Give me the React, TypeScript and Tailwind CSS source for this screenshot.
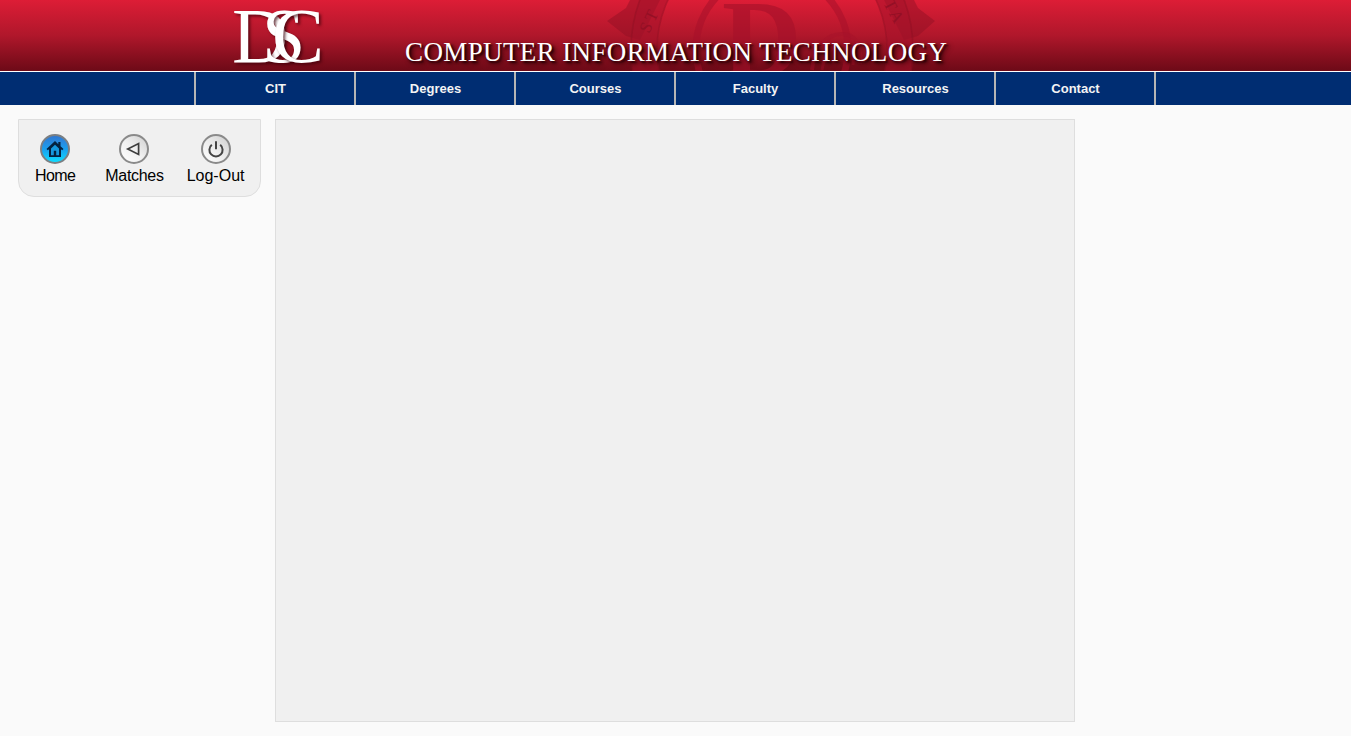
import React from 'react';

const navItems = ['CIT', 'Degrees', 'Courses', 'Faculty', 'Resources', 'Contact'];

// faint college seal behind the title
const Seal = () => (
  <svg className="absolute left-[600px] top-0" width="350" height="71" viewBox="0 0 350 71" fill="none">
    {/* star points either side */}
    <polygon points="7,21 26,8 30,0 60,0 40,40 26,36" fill="#8f0f24" opacity="0.45" />
    <polygon points="335,21 318,8 314,0 284,0 304,40 318,36" fill="#8f0f24" opacity="0.45" />
    <circle cx="172" cy="49" r="128" stroke="#a5112a" strokeWidth="25" opacity="0.5" />
    <circle cx="172" cy="49" r="141" stroke="#8f0f24" strokeWidth="1.5" opacity="0.5" />
    <circle cx="172" cy="49" r="115" stroke="#8f0f24" strokeWidth="1.5" opacity="0.5" />
    <circle cx="172" cy="49" r="76" stroke="#a5112a" strokeWidth="7" opacity="0.55" />
    <path d="M212 70c2-22 14-36 30-36 14 0 20 12 18 30" stroke="#a5112a" strokeWidth="4" opacity="0.5" />
    <path d="M222 70c2-14 10-25 20-25 9 0 12 8 11 20" stroke="#a5112a" strokeWidth="3" opacity="0.4" />
    <text x="49" y="34" fontFamily="'Liberation Serif', serif" fontSize="17" fill="#8f0f24" opacity="0.8" transform="rotate(-65 49 34)" letterSpacing="3">ST</text>
    <text x="283" y="3" fontFamily="'Liberation Serif', serif" fontSize="17" fill="#8f0f24" opacity="0.8" transform="rotate(62 283 3)" letterSpacing="3">TA</text>
    <text x="122" y="76" fontFamily="'Liberation Serif', serif" fontSize="110" fontWeight="700" fill="#a5112a" opacity="0.6">D</text>
  </svg>
);

const HomeIcon = () => (
  <span className="flex h-[30px] w-[30px] items-center justify-center rounded-full border-2 border-[#7b7f83] bg-gradient-to-b from-[#2f78d2] via-[#1a9fee] to-[#10dcff]">
    <svg width="20" height="20" viewBox="0 0 20 20">
      <path d="M10 2 1.5 10l1.3 1.3L4 10.2V18h12v-7.8l1.2 1.1 1.3-1.3-3-2.8V3h-2.2v2.2Z" fill="#04213f" />
      <path d="M10 5.8 6 9.4v6.9h2.8v-4.6h2.4v4.6H14V9.4Z" fill="#1597dd" />
      <rect x="9" y="12" width="2" height="5" fill="#04213f" />
    </svg>
  </span>
);

const BackIcon = () => (
  <span className="flex h-[30px] w-[30px] items-center justify-center rounded-full border-2 border-[#8a8a8a] bg-gradient-to-bl from-[#cfcfcf] via-[#f0f0f0] to-[#ffffff]">
    <svg width="18" height="18" viewBox="0 0 18 18" fill="none">
      <path d="M2.8 9 13.6 3.6v10.8Z" stroke="#3d3d3d" strokeWidth="1.7" />
    </svg>
  </span>
);

const PowerIcon = () => (
  <span className="flex h-[30px] w-[30px] items-center justify-center rounded-full border-2 border-[#8a8a8a] bg-gradient-to-bl from-[#cfcfcf] via-[#ececec] to-[#ffffff]">
    <svg width="20" height="20" viewBox="0 0 20 20" fill="none">
      <path d="M5.8 5.8a6.6 6.6 0 1 0 8.4 0" stroke="#444" strokeWidth="2" />
      <path d="M10 2.2v8" stroke="#444" strokeWidth="2" />
    </svg>
  </span>
);

const App: React.FC = () => {
  return (
    <div className="flex min-h-[736px] flex-col overflow-hidden bg-[#fafafa] font-['Liberation_Sans',Arial,sans-serif]">
      {/* Banner */}
      <header className="relative h-[71px] overflow-hidden bg-gradient-to-b from-[#dd1d36] via-[#b0172b] to-[#6d0a17]">
        <Seal />
        <div className="relative ml-[232px] flex h-full items-start">
          <div className="relative h-[64px] w-[92px] font-['Liberation_Serif',serif] text-[78px] leading-[78px] text-white [text-shadow:2px_2px_3px_rgba(60,0,10,0.7)]">
            <span className="absolute left-0 top-[-3px]">D</span>
            <span className="absolute left-[30px] top-[-3px]">S</span>
            <span className="absolute left-[40px] top-[-3px]">C</span>
          </div>
          <h1 className="ml-[81px] mt-[36px] whitespace-nowrap font-['Liberation_Serif',serif] text-[27px] leading-[32px] tracking-[0.38px] text-white [text-shadow:2px_2px_2px_#2a0005,3px_3px_5px_#2a0005]">
            COMPUTER INFORMATION TECHNOLOGY
          </h1>
        </div>
      </header>

      {/* Nav */}
      <nav className="flex h-[34px] border-t border-white bg-[#002d72] pl-[194px]">
        {navItems.map(item => (
          <a key={item} className="flex w-[160px] items-center justify-center border-l-2 border-[#b5b5b5] pl-px text-[13px] font-bold text-[#f4f4f4]">
            {item}
          </a>
        ))}
        <div className="w-0 border-l-2 border-[#b5b5b5]" />
      </nav>

      {/* Body */}
      <div className="flex items-start gap-[14px] pl-[18px] pt-[14px]">
        <aside className="flex h-[78px] w-[243px] rounded-b-[16px] border border-[#dedede] bg-[#f0f0f0] pt-[14px] text-[16px] leading-[20px] text-black">
          <div className="ml-[16px] flex flex-col items-center gap-[2px]">
            <HomeIcon />
            <span className="tracking-[-0.6px]">Home</span>
          </div>
          <div className="ml-[30px] flex flex-col items-center gap-[2px]">
            <BackIcon />
            <span className="tracking-[-0.3px]">Matches</span>
          </div>
          <div className="ml-[23px] flex flex-col items-center gap-[2px]">
            <PowerIcon />
            <span>Log-Out</span>
          </div>
        </aside>
        <main className="h-[603px] w-[800px] border border-[#dedede] bg-[#f0f0f0]" />
      </div>
    </div>
  );
};

export default App;
